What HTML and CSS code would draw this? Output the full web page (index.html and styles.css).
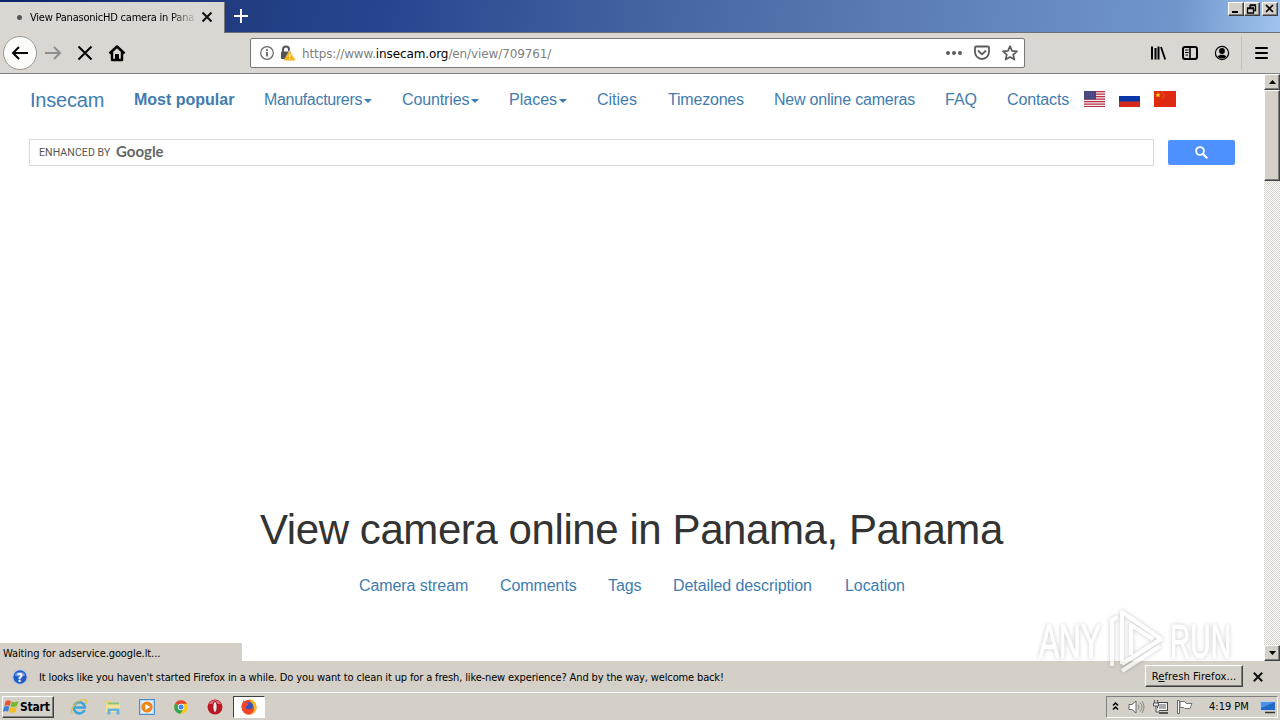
FILE: index.html
```html
<!DOCTYPE html>
<html lang="en">
  <head>
    <meta charset="utf-8" />
    <title>View PanasonicHD camera in Panama</title>
    <link rel="stylesheet" href="styles.css">
  </head>
  <body>
    <div class="titlebar">
      <div class="tab">
        <span class="tab-dot"></span>
        <span class="tab-title">View PanasonicHD camera in Pana</span>
        <svg class="tab-close" width="12" height="12" viewBox="0 0 12 12"><path d="M1.5 1.500l9 9M10.500 1.500l-9 9" stroke="#111" stroke-width="2" /></svg>
      </div>
      <svg class="tab-new" width="14" height="14" viewBox="0 0 14 14"><path d="M7 0v14M0 7h14" stroke="#fff" stroke-width="2" /></svg>
      <div class="window-buttons">
        <span class="win-btn"><svg width="14" height="12"><path d="M3 9h6" stroke="#000" stroke-width="2" /></svg></span>
        <span class="win-btn"><svg width="14" height="12"><path d="M5 5V2.500h5.500V7.500H8.500M5 2h6M2.500 5.500h6v4.500h-6zM2 5h7" fill="none" stroke="#000" stroke-width="1.300" /></svg></span>
        <span class="win-btn win-close"><svg width="14" height="12"><path d="M3 2l7 7M10 2l-7 7" stroke="#000" stroke-width="1.700" /></svg></span>
      </div>
    </div>

    <div class="toolbar">
      <span class="back"><svg width="18" height="16" viewBox="0 0 18 16"><path d="M17 8H2.500M8 2L2 8l6 6" fill="none" stroke="#000" stroke-width="2" /></svg></span>
      <svg class="forward" width="18" height="16" viewBox="0 0 18 16"><path d="M1 8h14.500M10 2l6 6-6 6" fill="none" stroke="#908e8b" stroke-width="2" /></svg>
      <svg class="stop" width="16" height="16" viewBox="0 0 16 16"><path d="M1.500 1.500l13 13M14.500 1.500l-13 13" stroke="#000" stroke-width="2" /></svg>
      <svg class="home" width="18" height="18" viewBox="0 0 18 18"><path d="M1.500 9.500L9 2.500l7.500 7M4 8v8h10V8" fill="none" stroke="#000" stroke-width="2.400" stroke-linejoin="round" /><path d="M7 15.500V10h4v5.500z" /></svg>
      <div class="urlbar">
        <svg width="14" height="14" viewBox="0 0 14 14"><circle cx="7" cy="7" r="6.300" fill="none" stroke="#666" stroke-width="1.200" /><path d="M7 6v4.500M7 3.300v1.700" stroke="#555" stroke-width="1.600" /></svg>
        <svg class="lock" width="16" height="16" viewBox="0 0 16 16"><path d="M3 7V4.500a3 3 0 0 1 6 0V6" fill="none" stroke="#555" stroke-width="2" /><rect x="1" y="6.500" width="10" height="7.500" rx="1" fill="#555" /><path d="M9.500 5.500L15.500 15.500H4z" fill="#fbb112" stroke="#f5dca0" stroke-width=".5" /><path d="M9.700 9v3M9.700 13v1.300" stroke="#fff" stroke-width="1.300" /></svg>
        <span class="url">https://www.<b>insecam.org</b>/en/view/709761/</span>
        <span class="url-actions">
          <svg width="16" height="16" viewBox="0 0 16 16" fill="#5c5c5c"><circle cx="2" cy="8" r="2" /><circle cx="8" cy="8" r="2" /><circle cx="14" cy="8" r="2" /></svg>
          <svg width="16" height="16" viewBox="0 0 16 16" fill="none" stroke="#5c5c5c" stroke-width="1.800" stroke-linejoin="round" stroke-linecap="round"><path d="M2 1.500h12a1 1 0 0 1 1 1V7a7 7 0 0 1-14 0V2.500a1 1 0 0 1 1-1z" /><path d="M4.500 6L8 9.300 11.500 6" /></svg>
          <svg width="16" height="16" viewBox="0 0 16 16"><path d="M8 1.200l2 4.700 5 .4-3.800 3.300 1.200 5L8 12l-4.400 2.600 1.200-5L1 6.300l5-.4z" fill="none" stroke="#5c5c5c" stroke-width="1.700" stroke-linejoin="round" /></svg>
        </span>
      </div>
      <div class="tools">
        <svg width="16" height="16" viewBox="0 0 16 16"><path d="M2 1.500v13M5.500 3v11.500M8.500 1.500v13" stroke="#000" stroke-width="2" /><path d="M11 2l4.200 12.500" stroke="#000" stroke-width="1.800" /></svg>
        <svg width="16" height="16" viewBox="0 0 16 16"><rect x="1" y="2" width="14" height="12" rx="2" fill="none" stroke="#000" stroke-width="2" /><path d="M8 2v12" stroke="#000" stroke-width="1.600" /><path d="M3 5h3.500M3 7.500h3.500M3.500 10h2.500" stroke="#000" /></svg>
        <svg width="16" height="16" viewBox="0 0 16 16"><circle cx="8" cy="8" r="6.600" fill="none" stroke="#000" stroke-width="1.200" /><circle cx="8" cy="6" r="2.900" /><path d="M3.500 11.500c2-2.500 7-2.500 9 0C11 14 5 14 3.500 11.500z" /></svg>
      </div>
      <span class="menu"><svg width="13" height="14" viewBox="0 0 13 14"><path d="M1 2h11M1 7h11M1 12h11" stroke="#000" stroke-width="2" stroke-linecap="round" /></svg></span>
    </div>

    <div class="viewport">
      <div class="page">
        <nav class="navbar">
          <a class="brand">Insecam</a>
          <a class="popular">Most popular</a>
          <a class="manufacturers">Manufacturers<i class="caret"></i></a>
          <a class="countries">Countries<i class="caret"></i></a>
          <a class="places">Places<i class="caret"></i></a>
          <a class="cities">Cities</a>
          <a class="timezones">Timezones</a>
          <a class="cameras">New online cameras</a>
          <a class="faq">FAQ</a>
          <a class="contacts">Contacts</a>
          <span class="flags">
            <svg width="21" height="16" viewBox="0 0 21 16"><path fill="#f6e9ea" d="M0 0h21v16H0z" /><path d="M0 .6h21M0 3.100h21M0 5.600h21M0 8.100h21M0 10.600h21M0 13.100h21M0 15.500h21" stroke="#b8334a" stroke-width="1.100" /><path fill="#46467f" d="M0 0h12v8.500H0z" /><path d="M1 2h10M1 4.200h10M1 6.400h10" stroke="#666690" stroke-width=".7" stroke-dasharray="1 1" /></svg>
            <svg width="21" height="16" viewBox="0 0 21 16"><path fill="#fff" d="M0 0h21v5H0z" /><path fill="#0b38a8" d="M0 5h21v6H0z" /><path fill="#d7281d" d="M0 10.500h21V16H0z" /></svg>
            <svg width="22" height="16" viewBox="0 0 22 16"><path fill="#df2910" d="M0 0h22v16H0z" /><path fill="#ffde00" d="M4 1.300l.7 1.900h2L5.100 4.400l.6 1.900L4 5.200 2.300 6.300l.6-1.900L1.300 3.200h2z" /><path d="M8 1.500h1M9.500 3.300h1M9.500 5.300h1M8 7h1" stroke="#ee7a10" /></svg>
          </span>
        </nav>
        <div class="search">
          <div class="search-box"><span class="enhanced">ENHANCED BY</span><span class="google">Google</span></div>
          <div class="search-btn"><svg width="13" height="13" viewBox="0 0 13 13"><circle cx="5" cy="5" r="3.900" fill="none" stroke="#fff" stroke-width="1.900" /><path d="M8 8l4.300 4.300" stroke="#fff" stroke-width="2.200" /></svg></div>
        </div>
        <h1>View camera online in Panama, Panama</h1>
        <div class="links">
          <a class="l-stream">Camera stream</a>
          <a class="l-comments">Comments</a>
          <a class="l-tags">Tags</a>
          <a class="l-detail">Detailed description</a>
          <a class="l-location">Location</a>
        </div>
        <div class="status">Waiting for adservice.google.lt...</div>
      </div>
      <div class="scrollbar">
        <span class="scroll-btn"><svg width="7" height="4"><path d="M0 4L3.500 0 7 4z" /></svg></span>
        <span class="thumb"></span>
        <span class="scroll-btn scroll-down"><svg width="7" height="4"><path d="M0 0l3.500 4L7 0z" /></svg></span>
      </div>
    </div>

    <div class="notice">
      <svg width="16" height="16" viewBox="0 0 16 16"><circle cx="8" cy="8" r="7.300" fill="#2458c5" stroke="#b9c9e8" stroke-width="1.300" /><path d="M2.500 6a6 5 0 0 1 11 0c-3 2-8 2-11 0z" fill="#6f9ae6" /><text x="8" y="12.500" text-anchor="middle" class="question">?</text></svg>
      <span class="notice-text">It looks like you haven't started Firefox in a while. Do you want to clean it up for a fresh, like-new experience? And by the way, welcome back!</span>
      <span class="refresh"><span>R<u>e</u>fresh Firefox...</span></span>
      <svg class="notice-close" width="10" height="10" viewBox="0 0 10 10"><path d="M.8.8l8.400 8.400M9.200.8L.8 9.200" stroke="#111" stroke-width="2" /></svg>
    </div>

    <div class="taskbar">
      <div class="start">
        <svg width="17" height="16" viewBox="0 0 16 15"><path d="M2.500 2c2-1.300 3.500-1 5 0L6.300 6.500c-1.500-1-3-1-5 0z" fill="#e8542b" /><path d="M8.200 2.400c2 1 4 .8 6.500-.6l-1.400 4.600c-2 1.300-4 1.300-6.300.4z" fill="#76b82d" /><path d="M1 7.200c2-1 3.500-1 5 0L4.800 12c-1.500-1-3-1-5 0z" fill="#3e83d5" /><path d="M6.700 7.600c2 1 4 1 6.300-.4L12 12c-2 1.300-4 1.300-6.300.4z" fill="#f7bd25" /></svg>
        <span>Start</span>
      </div>
      <div class="apps">
        <svg width="18" height="18" viewBox="0 0 18 18"><path d="M14.500 12a5.600 5.600 0 1 1 .3-3.500v1H5" fill="none" stroke="#3ba5dc" stroke-width="2.600" /><path d="M2.500 15.500C-1 13 5 4 12 2c5-1.500 5 1.500 3.500 4" fill="none" stroke="#e7bf3c" stroke-width="1.300" /></svg>
        <svg width="18" height="18" viewBox="0 0 18 18"><path d="M2 3h5l1 2h8v9H2z" fill="#efcf70" /><path d="M4 4.500h11V8H4z" fill="#8bc37a" /><path d="M2 6.500h14V14H2z" fill="#f8e29a" /><path d="M3.500 16.500v-6h12v6h-3v-3.500h-6v3.500z" fill="#65b4dd" /></svg>
        <svg width="18" height="18" viewBox="0 0 18 18"><rect x="1.500" y="1.500" width="15" height="15" fill="#b9d9f0" stroke="#4d8ecb" /><rect x="3.500" y="3" width="11" height="12" fill="#e9f4fb" /><circle cx="9" cy="9" r="5.600" fill="#f08519" /><path d="M7.300 6l5 3-5 3z" fill="#fff" /></svg>
        <svg width="18" height="18" viewBox="0 0 18 18"><circle cx="9" cy="9" r="6.800" fill="#fbc916" /><path d="M9 9L3.100 5.600A6.800 6.800 0 0 1 15 5.800H9z" fill="#df4335" /><path d="M9 9L3.100 5.600A6.800 6.800 0 0 0 8.500 15.800l3-5z" fill="#35a354" /><circle cx="9" cy="9" r="3.200" fill="#fff" /><circle cx="9" cy="9" r="2.500" fill="#4285f4" /></svg>
        <svg width="18" height="18" viewBox="0 0 18 18"><circle cx="9" cy="9" r="7.500" fill="#bd1724" /><path d="M3 6a6.500 6 0 0 1 12 0z" fill="#de6971" /><ellipse cx="9" cy="9" rx="2.200" ry="5.500" fill="#f3e6e6" stroke="#8d0c16" /></svg>
        <span class="active-app"><svg width="18" height="18" viewBox="0 0 18 18"><circle cx="9" cy="9.300" r="7.500" fill="#f5462a" /><path d="M9 1a8 8 0 0 1 7.500 8c0 4.500-3 7.500-7.500 7.500 3-1 5-3 5-6 0-4-3-5-5-9.500z" fill="#fcb81e" /><circle cx="9" cy="8" r="4" fill="#3b55b6" /><path d="M1.600 7l2-5 2 3 3 .5c0 2-3 2-3 4s4 2.500 6 .5c0 4-9 5-10-1z" fill="#f5462a" /></svg></span>
      </div>
      <div class="tray">
        <svg class="chevrons" width="7" height="11" viewBox="0 0 7 11"><path d="M1 4.500L3.500 2 6 4.500M1 8.500L3.500 6 6 8.500" fill="none" stroke="#000" stroke-width="1.500" /></svg>
        <svg class="speaker" width="17" height="16" viewBox="0 0 17 16"><path d="M1 5.500h3L8 2v12l-4-3.500H1z" fill="#fff" stroke="#666" /><path d="M10 5.500q2 2.500 0 5M12 3.500q4 4.500 0 9M14 2q4 6 0 12" fill="none" stroke="#888" /></svg>
        <svg class="network" width="17" height="16" viewBox="0 0 17 16"><rect x="5.500" y="3.500" width="10" height="8" fill="#aaa" stroke="#444" /><path d="M6.500 4.500h8v6h-8z" fill="none" stroke="#fff" /><path d="M7 14h9" stroke="#555" stroke-width="2" /><path d="M2.500 1v3M5.500 1v3M1.500 4h5v3h-5zM4 7v6h4" fill="#eee" stroke="#555" /></svg>
        <svg class="flag" width="17" height="16" viewBox="0 0 17 16"><path d="M1.500 1.500h2v13h-2z" fill="#fff" stroke="#666" /><path d="M4 2.500h5l1 2h6l-2 5H9l-1-1H4z" fill="#fff" stroke="#777" /></svg>
        <span class="clock">4:19 PM</span>
        <svg class="desktop" width="16" height="14" viewBox="0 0 16 14"><path d="M.5 1.500h15v9H.5z" fill="#2468c5" stroke="#bcd0e8" /><path d="M1 2h14L1 8z" fill="#4c91e4" /><path d="M5 12.500h10" stroke="#333" stroke-width="1.500" /></svg>
      </div>
    </div>

    <svg class="watermark" width="240" height="80" viewBox="0 0 240 80">
      <text x="9" y="58" textLength="62" lengthAdjust="spacingAndGlyphs">ANY</text>
      <text x="140" y="58" textLength="61" lengthAdjust="spacingAndGlyphs">RUN</text>
      <path class="mark-back" d="M82 66V20l6-3M92 64V12" />
      <path class="mark" d="M92 62V12l39 27-39 25M101 55V25l22 14" />
      <path class="mark" d="M92 71l38-25" />
    </svg>
  </body>
</html>
```
FILE: styles.css
```css
* {
  box-sizing: border-box;
}

body {
  margin: 0;
  width: 1280px;
  height: 720px;
  overflow: hidden;
  display: flex;
  flex-direction: column;
  background: #fff;
  color: #000;
  font-family: "DejaVu Sans Condensed", "DejaVu Sans", sans-serif;
  font-stretch: condensed;
  font-size: 11px;
}

svg {
  display: block;
  flex: none;
}

/* browser window */

.titlebar {
  height: 33px;
  flex: none;
  display: flex;
  align-items: flex-start;
  padding-top: 2px;
  background: linear-gradient(97deg, #0a246a 0, #213c80 18%, #27458f 30%, #4263a0 50%, #5b7cb6 70%, #6f97cc 92%, #a0c4ee 100%);
  border-bottom: 1px solid #6d7078;
}

.tab {
  width: 225px;
  height: 31px;
  display: flex;
  align-items: center;
  padding-left: 17px;
  background: #dad6d1;
  border-right: 1px solid #777;
}

.tab-dot {
  width: 5px;
  height: 5px;
  border-radius: 50%;
  background: #555;
}

.tab-title {
  width: 166px;
  margin-left: 8px;
  white-space: nowrap;
  letter-spacing: -0.22px;
  -webkit-mask-image: linear-gradient(90deg, #000 140px, transparent 168px);
}

.tab-close {
  margin: -1px 0 0 5px;
}

.tab-new {
  margin: 7px 0 0 9px;
}

.window-buttons {
  display: flex;
  margin-left: auto;
  padding-right: 2px;
}

.win-btn,
.scroll-btn,
.thumb,
.start,
.refresh {
  background: #d4d0c8;
  border: 1px solid;
  border-color: #fff #404040 #404040 #fff;
  box-shadow: inset -1px -1px #808080;
}

.win-btn {
  width: 16px;
  height: 14px;
}

.win-close {
  margin-left: 2px;
}

.toolbar {
  height: 41px;
  flex: none;
  display: flex;
  align-items: center;
  padding-left: 3px;
  background: #dad6d1;
  border-bottom: 1px solid #828282;
}

.back {
  width: 34px;
  height: 34px;
  display: flex;
  align-items: center;
  justify-content: center;
  border: 1px solid #9b9994;
  border-radius: 50%;
  background: #fbfbfa;
}

.forward {
  margin-left: 7px;
}

.stop {
  margin-left: 15px;
}

.home {
  margin-left: 15px;
}

.urlbar {
  width: 775px;
  height: 30px;
  display: flex;
  align-items: center;
  margin-left: 124px;
  padding: 0 6px 0 9px;
  background: #fff;
  border: 1px solid #777;
  border-radius: 2px;
}

.lock {
  margin-left: 6px;
}

.url {
  margin: 1px 0 0 6px;
  font-family: "DejaVu Sans", sans-serif;
  font-stretch: normal;
  font-size: 12px;
  letter-spacing: -0.11px;
  color: #808080;
}

.url b {
  font-weight: normal;
  color: #000;
}

.url-actions {
  display: flex;
  gap: 12px;
  margin-left: auto;
}

.tools {
  display: flex;
  gap: 16px;
  margin-left: 125px;
}

.menu {
  height: 34px;
  display: flex;
  align-items: center;
  margin-left: 11px;
  padding-left: 13px;
  border-left: 1px solid #c5c1bb;
}

/* page */

.viewport {
  height: 587px;
  flex: none;
  display: flex;
}

.page {
  width: 1264px;
  display: flex;
  flex-direction: column;
  font-family: "Liberation Sans", Arial, sans-serif;
  font-stretch: normal;
  font-size: 16px;
  color: #333;
}

.page a {
  color: #3f7cb0;
  white-space: nowrap;
}

.navbar {
  height: 50px;
  display: flex;
  align-items: center;
  padding: 2px 0 0 30px;
}

.navbar .brand {
  width: 104px;
  font-size: 20px;
  letter-spacing: -0.2px;
}

.navbar .popular {
  width: 130px;
  font-weight: bold;
}

.manufacturers {
  width: 138px;
  letter-spacing: -0.32px;
}

.countries {
  width: 107px;
  letter-spacing: -0.12px;
}

.places {
  width: 88px;
}

.cities {
  width: 71px;
}

.timezones {
  width: 106px;
  letter-spacing: -0.2px;
}

.cameras {
  width: 171px;
  letter-spacing: -0.22px;
}

.faq {
  width: 62px;
}

.contacts {
  width: 77px;
  letter-spacing: -0.12px;
}

.caret {
  display: inline-block;
  margin-left: 2px;
  vertical-align: middle;
  border-top: 4px solid;
  border-left: 4px solid transparent;
  border-right: 4px solid transparent;
}

.flags {
  display: flex;
  gap: 14px;
  padding-bottom: 2px;
}

.search {
  display: flex;
  align-items: center;
  margin-top: 15px;
  padding-left: 29px;
}

.search-box {
  width: 1125px;
  height: 27px;
  display: flex;
  align-items: center;
  padding-left: 9px;
  border: 1px solid #d9d9d9;
}

.enhanced {
  width: 77px;
  font-family: Roboto, sans-serif;
  font-size: 10.5px;
  letter-spacing: 0.1px;
  color: #555;
}

.google {
  padding-bottom: 3px;
  font-family: Lato, sans-serif;
  font-size: 15px;
  font-weight: bold;
  color: #666;
}

.search-btn {
  width: 67px;
  height: 25px;
  display: flex;
  align-items: center;
  justify-content: center;
  margin-left: 14px;
  background: #4d90fe;
  border-radius: 2px;
}

h1 {
  margin: 340px 0 0;
  padding-left: 260px;
  font-size: 42px;
  font-weight: normal;
  line-height: 48px;
  letter-spacing: -0.42px;
  white-space: nowrap;
}

.links {
  display: flex;
  margin-top: 22px;
  padding-left: 359px;
  line-height: 20px;
  letter-spacing: -0.08px;
}

.l-stream {
  width: 141px;
}

.l-comments {
  width: 108px;
}

.l-tags {
  width: 65px;
}

.l-detail {
  width: 172px;
}

.status {
  width: 242px;
  height: 18px;
  margin-top: auto;
  padding: 4px 0 0 3px;
  background: #d4d0c8;
  font-family: "DejaVu Sans Condensed", "DejaVu Sans", sans-serif;
  font-stretch: condensed;
  font-size: 11px;
  letter-spacing: -0.1px;
  color: #000;
}

.scrollbar {
  width: 16px;
  display: flex;
  flex-direction: column;
  background: repeating-conic-gradient(#fff 0 25%, #d4d0c8 0 50%) 0 0 / 2px 2px;
}

.scroll-btn {
  height: 16px;
  display: flex;
  align-items: center;
  justify-content: center;
}

.thumb {
  height: 91px;
}

.scroll-down {
  margin-top: auto;
}

/* notification bar and taskbar */

.notice {
  height: 31px;
  flex: none;
  display: flex;
  align-items: center;
  padding: 1px 0 0 12px;
  background: #d4d0c8;
}

.question {
  font-size: 12px;
  font-weight: bold;
  fill: #fff;
}

.notice-text {
  margin-left: 11px;
  white-space: nowrap;
  letter-spacing: -0.14px;
}

.refresh {
  width: 98px;
  height: 22px;
  display: flex;
  align-items: center;
  justify-content: center;
  margin: -2px 0 0 auto;
  letter-spacing: 0.1px;
}

.notice-close {
  margin: 0 17px 0 10px;
}

.taskbar {
  height: 28px;
  flex: none;
  display: flex;
  align-items: center;
  padding: 0 2px;
  background: #d4d0c8;
  border-top: 1px solid #fff;
}

.start {
  width: 52px;
  height: 22px;
  display: flex;
  align-items: center;
  font-size: 12px;
  font-weight: bold;
  letter-spacing: -0.2px;
}

.apps {
  display: flex;
  align-items: center;
  gap: 16px;
  margin-left: 16px;
}

.active-app {
  width: 32px;
  height: 22px;
  display: flex;
  align-items: center;
  justify-content: center;
  margin-left: -7px;
  background: #fff;
  border: 1px solid;
  border-color: #404040 #fff #fff #404040;
}

.tray {
  width: 172px;
  height: 22px;
  display: flex;
  align-items: center;
  margin-left: auto;
  padding-left: 5px;
  border: 1px solid;
  border-color: #808080 #fff #fff #808080;
}

.speaker {
  margin-left: 9px;
}

.network,
.flag {
  margin-left: 7px;
}

.clock {
  width: 51px;
  margin-left: 16px;
  white-space: nowrap;
}

/* floats over the page and the notification bar */
.watermark {
  position: absolute;
  left: 1030px;
  top: 600px;
  filter: drop-shadow(0 0 2px rgba(0, 0, 0, 0.3));
  opacity: 0.7;
  pointer-events: none;
}

.watermark text {
  font-family: "Liberation Sans Narrow", "Liberation Sans", sans-serif;
  font-size: 48px;
  fill: #fff;
  stroke: #fff;
  stroke-width: 1;
}

.watermark path {
  fill: none;
  stroke: #fff;
  stroke-width: 4;
  stroke-linejoin: round;
}
```
